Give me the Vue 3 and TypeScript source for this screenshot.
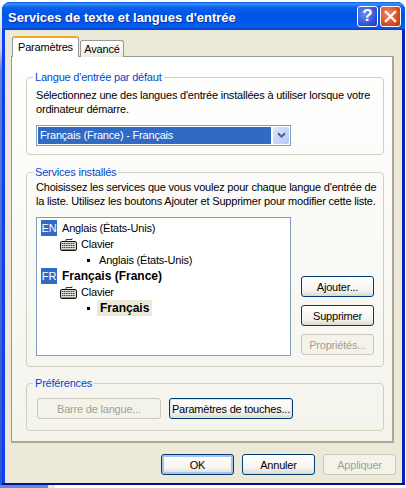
<script setup lang="ts">
interface TreeRow {
  level: 'lang' | 'kind' | 'item'
  badge?: string
  text: string
  active?: boolean
}

const rows: TreeRow[] = [
  { level: 'lang', badge: 'EN', text: 'Anglais (États-Unis)' },
  { level: 'kind', text: 'Clavier' },
  { level: 'item', text: 'Anglais (États-Unis)' },
  { level: 'lang', badge: 'FR', text: 'Français (France)', active: true },
  { level: 'kind', text: 'Clavier' },
  { level: 'item', text: 'Français', active: true },
]
</script>

<template>
  <div class="desktop">
    <div class="window">
      <div class="titlebar">
        <span class="title">Services de texte et langues d'entrée</span>
        <button class="caption help">?</button>
        <button class="caption close">
          <svg width="13" height="13" viewBox="0 0 13 13">
            <path d="M2 2 L11 11 M11 2 L2 11" stroke="#fff" stroke-width="2.4" stroke-linecap="square" />
          </svg>
        </button>
      </div>
      <div class="body">
        <div class="tabs">
          <div class="tab active">Paramètres</div>
          <div class="tab">Avancé</div>
        </div>
        <div class="panel">
          <fieldset class="group first">
            <legend>Langue d'entrée par défaut</legend>
            <p class="desc">Sélectionnez une des langues d'entrée installées à utiliser lorsque votre<br />ordinateur démarre.</p>
            <div class="combo">
              <div class="combo-value">Français (France) - Français</div>
              <div class="combo-arrow">
                <svg width="9" height="7" viewBox="0 0 9 7">
                  <path d="M1 1.2 L4.5 4.7 L8 1.2" fill="none" stroke="#4d6185" stroke-width="2" />
                </svg>
              </div>
            </div>
          </fieldset>

          <fieldset class="group second">
            <legend>Services installés</legend>
            <p class="desc">Choisissez les services que vous voulez pour chaque langue d'entrée de<br />la liste. Utilisez les boutons Ajouter et Supprimer pour modifier cette liste.</p>
            <div class="services">
              <div class="tree">
                <div v-for="(row, i) in rows" :key="i" class="row" :class="row.level">
                  <span v-if="row.badge" class="badge">{{ row.badge }}</span>
                  <svg v-if="row.level === 'kind'" class="kbd" width="17" height="13" viewBox="0 0 17 13">
                    <path d="M6 3 V1.5 H12 V0.5" fill="none" stroke="#333" />
                    <rect x="0.5" y="3.5" width="16" height="9" rx="1.5" fill="#dcdad2" stroke="#111" />
                    <path d="M2 5.5 H15 M2 7.5 H15 M2 9.5 H15" stroke="#3c3d46" stroke-dasharray="1.2 .6" />
                    <path d="M2 11.5 H15" stroke="#8a8a8a" />
                  </svg>
                  <span v-if="row.level === 'item'" class="bullet"></span>
                  <span class="label" :class="{ bold: row.active, picked: row.active && row.level === 'item' }">{{ row.text }}</span>
                </div>
              </div>
              <div class="side-buttons">
                <button class="btn">Ajouter...</button>
                <button class="btn">Supprimer</button>
                <button class="btn" disabled>Propriétés...</button>
              </div>
            </div>
          </fieldset>

          <fieldset class="group third">
            <legend>Préférences</legend>
            <div class="pref-buttons">
              <button class="btn wide" disabled>Barre de langue...</button>
              <button class="btn wide focused">Paramètres de touches...</button>
            </div>
          </fieldset>
        </div>
        <div class="footer">
          <button class="btn default">OK</button>
          <button class="btn">Annuler</button>
          <button class="btn" disabled>Appliquer</button>
        </div>
      </div>
    </div>
  </div>
</template>

<style>
html,
body {
  margin: 0;
  background: #fff;
}
</style>

<style scoped>
.desktop {
  width: 406px;
  height: 488px;
  box-sizing: border-box;
  padding: 2px 1px 3px 2px;
  overflow: hidden;
  background:
    linear-gradient(90deg, #6a85d8 0 48px, #ece9d8 48px 55px, #fff 55px) left bottom / 100% 3px no-repeat,
    linear-gradient(180deg, #fff 0, #c8ccd8 50px, #5f7fd0 70px, #4468c8 300px, #2a55d0 100%) left top / 2px 100% no-repeat,
    #fff;
  font-family: "Liberation Sans", Arial, sans-serif;
  font-size: 11px;
  letter-spacing: -0.2px;
  color: #000;
}

.window {
  height: 483px;
  display: flex;
  flex-direction: column;
  border-radius: 8px 8px 0 0;
  overflow: hidden;
  background:
    linear-gradient(#00138c, #00138c) left bottom / 100% 2px no-repeat,
    linear-gradient(90deg, #0f3ff0 0 3px, #0a22b0 3px);
}

.titlebar {
  height: 28px;
  flex: none;
  display: flex;
  align-items: center;
  padding: 0 4px 0 6px;
  background: linear-gradient(180deg, #0a5ee8 0, #3a93ff 2px, #0f62ee 5px, #0054e3 12px, #0058ee 22px, #0a5fe8 25px, #0040cf 28px);
}

.title {
  flex: 1;
  color: #fff;
  font-weight: 700;
  font-size: 13px;
  letter-spacing: 0;
  padding-top: 2px;
  text-shadow: 1px 1px 0 #0f2f9a;
  white-space: nowrap;
}

.caption {
  width: 21px;
  height: 21px;
  padding: 0;
  margin-left: 2px;
  border: 1px solid #fff;
  border-radius: 3px;
  display: flex;
  align-items: center;
  justify-content: center;
  color: #fff;
  font: 700 17px "Liberation Sans", Arial, sans-serif;
}

.help {
  background: radial-gradient(circle at 35% 35%, #6c8dee, #2a4fd6 70%, #1b3cb8);
}

.close {
  background: radial-gradient(circle at 35% 35%, #ec8a66, #d8481f 65%, #b93412);
}

.body {
  flex: 1;
  margin: 0 3px 2px;
  padding: 7px 6px 0 6px;
  background: #ece9d8;
  display: flex;
  flex-direction: column;
}

.tabs {
  height: 20px;
  display: flex;
  align-items: flex-end;
  padding-left: 1px;
  margin-bottom: -1px;
  position: relative;
  z-index: 1;
}

.tab {
  height: 17px;
  width: 44px;
  box-sizing: border-box;
  text-align: center;
  line-height: 17px;
  border: 1px solid #919b9c;
  border-bottom: none;
  border-radius: 3px 3px 0 0;
  background: linear-gradient(180deg, #fff, #ecebe3);
  margin-left: 1px;
}

.tab.active {
  width: 67px;
  height: 21px;
  line-height: 19px;
  margin-left: 0;
  background: #fff;
  border-top: 2px solid #f5a623;
}

.panel {
  width: 383px;
  height: 387px;
  box-sizing: border-box;
  border: 1px solid #919b9c;
  border-right: 2px solid #aca899;
  border-bottom: 2px solid #aca899;
  background: linear-gradient(180deg, #fff 0, #f4f3ec 100%);
  padding: 13px 0 0 14px;
}

.group {
  margin: 0;
  padding: 0 9px;
  border: 1px solid #d0d0bf;
  border-radius: 4px;
  min-width: 0;
  box-sizing: border-box;
  width: 358px;
}

.group legend {
  color: #0046d5;
  padding: 0 2px;
  margin-left: -3px;
  line-height: 14px;
}

.first {
  height: 85px;
}

.second {
  height: 202px;
  margin-top: 10px;
}

.third {
  height: 55px;
  margin-top: 9px;
}

.desc {
  margin: 4px 0 0;
  line-height: 14px;
  white-space: nowrap;
}

.second .desc {
  margin-top: 1px;
}

.combo {
  width: 255px;
  height: 21px;
  box-sizing: border-box;
  margin-top: 9px;
  border: 1px solid #7f9db9;
  background: #fff;
  padding: 1px;
  display: flex;
  gap: 2px;
}

.combo-value {
  flex: 1;
  background: #316ac5;
  color: #fff;
  padding-left: 2px;
  line-height: 17px;
}

.combo-arrow {
  width: 16px;
  background: linear-gradient(135deg, #dce6fb, #b4c8f6);
  border-radius: 2px;
  display: flex;
  align-items: center;
  justify-content: center;
}

.services {
  display: flex;
  margin-top: 9px;
}

.tree {
  width: 255px;
  height: 139px;
  box-sizing: border-box;
  flex: none;
  border: 1px solid #7f9db9;
  background: #fff;
  padding-top: 2px;
}

.row {
  height: 16px;
  display: flex;
  align-items: center;
  white-space: nowrap;
}

.row.lang {
  padding-left: 4px;
}

.row.kind {
  padding-left: 23px;
}

.row.item {
  padding-left: 50px;
}

.badge {
  width: 16px;
  height: 16px;
  background: #316ac5;
  color: #fff;
  text-align: center;
  line-height: 16px;
  margin-right: 5px;
}

.kbd {
  margin-right: 4px;
}

.bullet {
  width: 3px;
  height: 3px;
  background: #000;
  margin-right: 9px;
}

.label {
  line-height: 16px;
}

.bold {
  font-weight: 700;
  font-size: 12px;
  letter-spacing: 0;
}

.picked {
  background: #ece9d8;
  padding: 0 3px;
  margin-left: -2px;
}

.side-buttons {
  display: flex;
  flex-direction: column;
  gap: 8px;
  margin: 59px 0 0 10px;
}

.btn {
  width: 73px;
  height: 21px;
  padding: 0;
  box-sizing: border-box;
  border: 1px solid #003c74;
  border-radius: 3px;
  background: linear-gradient(180deg, #fff 0, #f4f3ee 70%, #dcd8ca 100%);
  color: #000;
  font: 11px "Liberation Sans", Arial, sans-serif;
  letter-spacing: -0.2px;
  white-space: nowrap;
}

.btn:disabled {
  border-color: #c9c7ba;
  background: #f4f3ea;
  color: #a1a192;
}

.pref-buttons {
  display: flex;
  gap: 8px;
  padding: 8px 0 0 1px;
}

.wide {
  width: 124px;
}

.focused {
  box-shadow: inset 0 0 0 1px #cee7ff;
}

.default {
  box-shadow: inset 0 0 0 2px #a9c3ee;
}

.footer {
  display: flex;
  gap: 8px;
  justify-content: flex-end;
  margin-top: 11px;
}
</style>
